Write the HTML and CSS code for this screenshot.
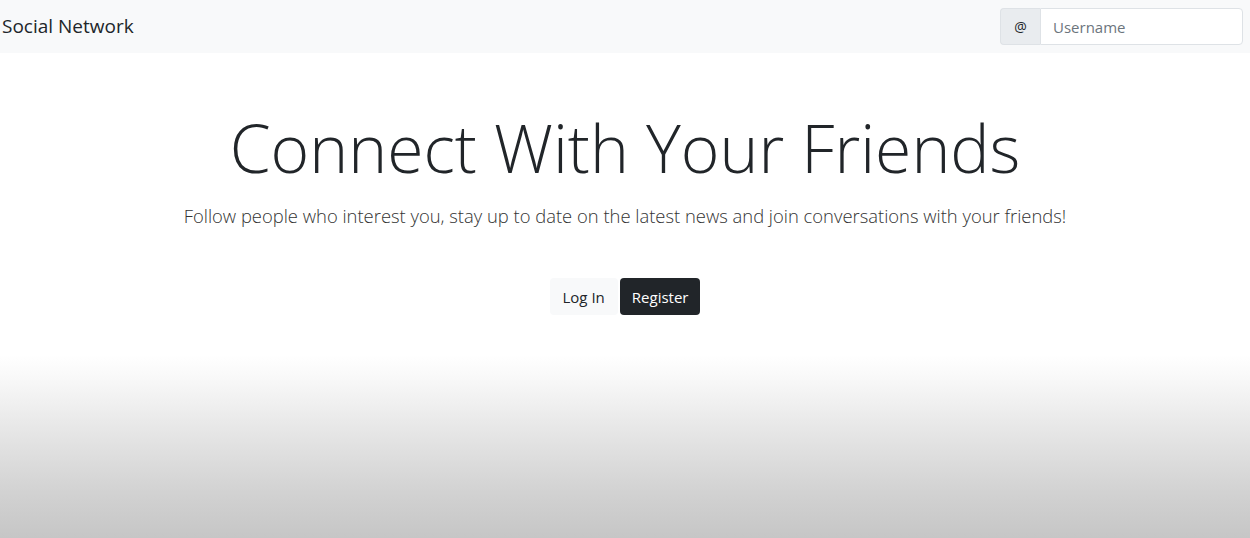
FILE: index.html
```html
<!DOCTYPE html>
<html lang="en">
<head>
<meta charset="utf-8">
<title>Social Network</title>
<link rel="stylesheet" href="styles.css">
</head>
<body>
<nav class="navbar">
  <a class="brand" href="#">Social Network</a>
  <div class="input-group">
    <span class="addon">@</span>
    <input class="field" type="text" placeholder="Username">
  </div>
</nav>
<main class="hero">
  <h1 class="display">Connect With Your Friends</h1>
  <p class="lead">Follow people who interest you, stay up to date on the latest news and join conversations with your friends!</p>
  <div class="actions">
    <a class="btn btn-light" href="#">Log In</a>
    <a class="btn btn-dark" href="#">Register</a>
  </div>
</main>
<div class="fade"></div>
</body>
</html>
```
FILE: styles.css
```css
* { box-sizing: border-box; }
html, body { margin: 0; height: 100%; }
body {
  font-family: "Open Sans", "Noto Sans", sans-serif;
  color: #212529;
  background: #fff;
  display: flex;
  flex-direction: column;
  min-height: 538px;
}
.navbar {
  display: flex;
  align-items: center;
  justify-content: space-between;
  height: 53px;
  padding: 0 7px 0 2px;
  background: #f8f9fa;
}
.brand {
  font-size: 19px;
  color: #212529;
  text-decoration: none;
  margin-top: -1px;
}
.input-group {
  display: flex;
  width: 243px;
  height: 37px;
}
.addon {
  width: 40px;
  display: flex;
  align-items: center;
  justify-content: center;
  background: #e9ecef;
  border: 1px solid #dee2e6;
  border-right: 0;
  border-radius: 4px 0 0 4px;
  font-size: 14px;
  color: #212529;
}
.field {
  flex: 1;
  min-width: 0;
  border: 1px solid #dee2e6;
  border-radius: 0 4px 4px 0;
  padding: 0 12px;
  font-family: inherit;
  font-size: 15px;
  color: #212529;
  background: #fff;
  outline: none;
}
.field::placeholder { color: #6c757d; }
.hero {
  text-align: center;
  padding-top: 61px;
}
.display {
  margin: 0;
  font-size: 66px;
  font-weight: 300;
  line-height: 1;
}
.lead {
  margin: 23px 0 0;
  font-size: 18.4px;
  line-height: 25px;
  font-weight: 300;
  color: #333;
}
.actions {
  display: flex;
  justify-content: center;
  gap: 2px;
  margin-top: 50px;
}
.btn {
  display: inline-flex;
  align-items: center;
  height: 37px;
  padding: 0 12px;
  border-radius: 4px;
  font-size: 15px;
  text-decoration: none;
}
.btn-light { background: #f8f9fa; color: #212529; padding: 0 13px; }
.btn-dark { background: #212529; color: #fff; }
.fade {
  flex: 1;
  margin-top: 40px;
  background: linear-gradient(to bottom, #ffffff 0%, #f7f7f7 15%, #e4e4e4 45%, #d2d2d2 75%, #c6c6c6 100%);
}
```
